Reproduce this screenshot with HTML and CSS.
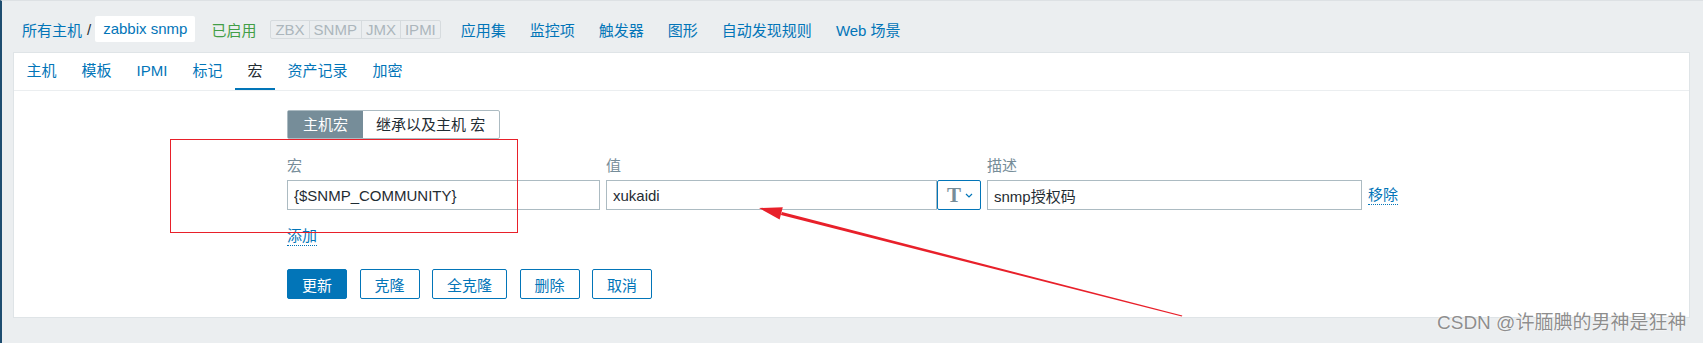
FILE: index.html
```html
<!DOCTYPE html>
<html lang="zh-CN">
<head>
    <meta charset="UTF-8">
    <meta name="viewport" content="width=device-width, initial-scale=1.0">
    <title>主机宏 - zabbix snmp</title>
    <link rel="stylesheet" href="styles.css">
</head>
<body>
    <div class="page">
        <header class="topbar">
            <a class="crumb" href="#">所有主机</a>
            <span class="crumb-sep">/</span>
            <span class="crumb-current">zabbix snmp</span>
            <span class="status-on">已启用</span>
            <span class="avail">
                <span>ZBX</span><span>SNMP</span><span>JMX</span><span>IPMI</span>
            </span>
            <a class="nav-link" href="#">应用集</a>
            <a class="nav-link" href="#">监控项</a>
            <a class="nav-link" href="#">触发器</a>
            <a class="nav-link" href="#">图形</a>
            <a class="nav-link" href="#">自动发现规则</a>
            <a class="nav-link" href="#">Web 场景</a>
        </header>

        <main class="card">
            <ul class="tabs">
                <li class="tab">主机</li>
                <li class="tab">模板</li>
                <li class="tab">IPMI</li>
                <li class="tab">标记</li>
                <li class="tab active">宏</li>
                <li class="tab">资产记录</li>
                <li class="tab">加密</li>
            </ul>

            <div class="tab-body">
                <div class="subtabs">
                    <span class="subtab current">主机宏</span>
                    <span class="subtab">继承以及主机 宏</span>
                </div>

                <div class="macro-grid">
                    <div class="col-label">宏</div>
                    <div class="col-label">值</div>
                    <div class="col-label">描述</div>
                    <div></div>

                    <input class="field" type="text" value="{$SNMP_COMMUNITY}">
                    <div class="value-cell">
                        <input class="field" type="text" value="xukaidi">
                        <button class="type-btn">
                            <span class="type-t">T</span>
                            <svg width="8" height="5" viewBox="0 0 8 5"><path d="M1 1l3 3 3-3" fill="none" stroke="#0275b8" stroke-width="1.2"/></svg>
                        </button>
                    </div>
                    <input class="field" type="text" value="snmp授权码">
                    <a class="link-action" href="#">移除</a>
                </div>

                <div class="add-row">
                    <a class="link-action" href="#">添加</a>
                </div>

                <div class="buttons">
                    <button class="btn primary">更新</button>
                    <button class="btn">克隆</button>
                    <button class="btn">全克隆</button>
                    <button class="btn">删除</button>
                    <button class="btn">取消</button>
                </div>
            </div>
        </main>
    </div>

    <!-- screenshot annotations -->
    <div class="mark-box"></div>
    <svg class="mark-arrow" width="1703" height="343" viewBox="0 0 1703 343">
        <polygon points="780.9,215 782,212 1182.3,315.4 1181.8,316.6" fill="#e8202a"/>
        <polygon points="759,208 782.8,207.2 779.6,219.6" fill="#e8202a"/>
    </svg>
    <div class="watermark">CSDN @许腼腆的男神是狂神</div>
</body>
</html>
```

FILE: styles.css
```css
body {
    margin: 0;
    padding: 0;
    background-color: #ebeef0;
    font-family: "Liberation Sans", Arial, "Noto Sans CJK SC", sans-serif;
    font-size: 15px;
    color: #1f2c33;
    width: 1703px;
    height: 343px;
    overflow: hidden;
    position: relative;
}

a {
    color: #0275b8;
    text-decoration: none;
}

.page {
    height: 342px;
    border-top: 1px solid #dde1e4;
    border-left: 2px solid #1e4d70;
}

/* header with breadcrumbs */
.topbar {
    display: flex;
    align-items: center;
    height: 46px;
    padding: 5px 0 0 20px;
    white-space: nowrap;
}

.crumb-sep {
    margin: 0 4px 0 5px;
    color: #1f2c33;
}

.crumb-current {
    background-color: #fff;
    height: 26px;
    line-height: 26px;
    padding: 0 8px;
    border-radius: 2px;
    color: #0275b8;
}

.status-on {
    margin-left: 16px;
    color: #429e47;
}

.avail {
    display: flex;
    margin-left: 14px;
    border: 1px solid #d6dbde;
    border-radius: 2px;
}

.avail span {
    padding: 0 4px;
    line-height: 17px;
    color: #acb6bc;
    border-left: 1px solid #d6dbde;
}

.avail span:first-child {
    border-left: none;
}

.nav-link {
    padding: 0 12px;
}

.avail + .nav-link {
    margin-left: 8px;
}

/* form card */
.card {
    margin: 0 13px 0 11px;
    background-color: #fff;
    border: 1px solid #dfe4e7;
    padding-bottom: 18px;
}

.tabs {
    display: flex;
    list-style: none;
    margin: 0;
    padding: 0;
    height: 37px;
    border-bottom: 1px solid #ebeef0;
}

.tab {
    padding: 0 12.5px;
    line-height: 35px;
    border-bottom: 2px solid transparent;
    color: #0275b8;
}

.tab.active {
    color: #1f2c33;
    border-bottom-color: #0275b8;
}

.tab-body {
    padding: 19px 0 0 273px;
}

.subtabs {
    display: inline-flex;
    border: 1px solid #acbbc2;
    border-radius: 2px;
}

.subtab {
    height: 27px;
    line-height: 27px;
    padding: 0 14px 0 13px;
}

.subtab.current {
    background-color: #768d99;
    color: #fff;
    padding: 0 15px;
}

.macro-grid {
    display: grid;
    grid-template-columns: 313px 375px 375px auto;
    column-gap: 6px;
    row-gap: 5px;
    margin-top: 18px;
    align-items: center;
}

.col-label {
    line-height: 18px;
    color: #768d99;
}

.field {
    box-sizing: border-box;
    height: 30px;
    width: 100%;
    margin: 0;
    padding: 0 6px;
    border: 1px solid #acbbc2;
    border-radius: 0;
    font-family: inherit;
    font-size: 15px;
    color: #1f2c33;
    background-color: #fff;
    outline: none;
}

.value-cell {
    display: flex;
}

.value-cell .field {
    flex: 1;
}

.type-btn {
    box-sizing: border-box;
    flex: 0 0 44px;
    height: 30px;
    display: flex;
    align-items: center;
    justify-content: center;
    gap: 4px;
    padding: 0 0 0 2px;
    background-color: #fff;
    border: 1px solid #0275b8;
    border-radius: 2px;
}

.type-t {
    font-family: "Liberation Serif", "DejaVu Serif", serif;
    font-weight: bold;
    font-size: 21px;
    line-height: 20px;
    color: #768d99;
}

.link-action {
    justify-self: start;
    line-height: 18px;
    border-bottom: 1px dotted #0275b8;
}

.add-row {
    display: flex;
    margin-top: 17px;
}

.buttons {
    display: flex;
    gap: 12.5px;
    margin-top: 23px;
}

.btn {
    box-sizing: border-box;
    height: 30px;
    padding: 0 14px;
    background-color: #fff;
    border: 1px solid #0275b8;
    border-radius: 2px;
    font-family: inherit;
    font-size: 15px;
    color: #0275b8;
}

.btn.primary {
    background-color: #0275b8;
    color: #fff;
}

/* red markers and watermark drawn over the screenshot */
.mark-box {
    position: absolute;
    left: 170px;
    top: 139px;
    width: 346px;
    height: 92px;
    border: 1px solid #e8202a;
}

.mark-arrow {
    position: absolute;
    left: 0;
    top: 0;
}

.watermark {
    position: absolute;
    left: 1437px;
    top: 312px;
    font-size: 19px;
    line-height: 22px;
    color: #8e8e8e;
    text-shadow: 0 0 1px #fff, 0 0 2px #fff;
    white-space: nowrap;
}
```
